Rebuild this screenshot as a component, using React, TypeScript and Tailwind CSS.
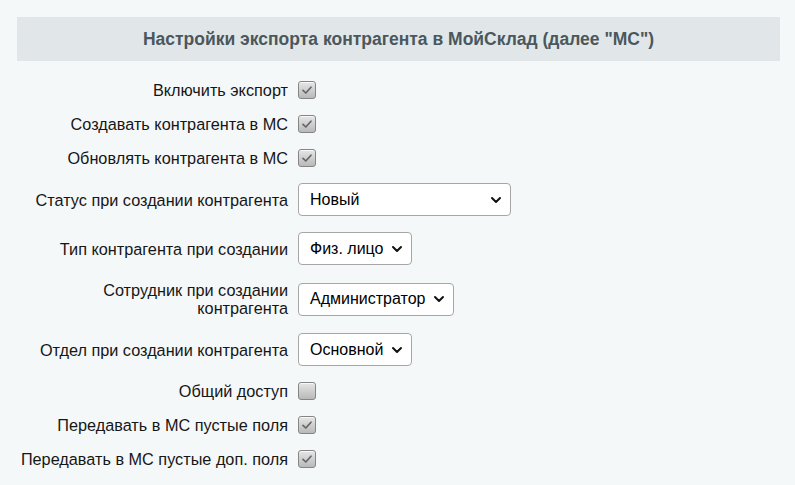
import React from "react";

type Row =
  | { kind: "check"; label: string; checked: boolean }
  | { kind: "select"; label: string; value: string; width: string };

const rows: Row[] = [
  { kind: "check", label: "Включить экспорт", checked: true },
  { kind: "check", label: "Создавать контрагента в МС", checked: true },
  { kind: "check", label: "Обновлять контрагента в МС", checked: true },
  { kind: "select", label: "Статус при создании контрагента", value: "Новый", width: "w-[213px]" },
  { kind: "select", label: "Тип контрагента при создании", value: "Физ. лицо", width: "w-[114px]" },
  { kind: "select", label: "Сотрудник при создании контрагента", value: "Администратор", width: "w-[156px]" },
  { kind: "select", label: "Отдел при создании контрагента", value: "Основной", width: "w-[114px]" },
  { kind: "check", label: "Общий доступ", checked: false },
  { kind: "check", label: "Передавать в МС пустые поля", checked: true },
  { kind: "check", label: "Передавать в МС пустые доп. поля", checked: true },
];

function Checkbox({ checked }: { checked: boolean }) {
  return (
    <span className="flex h-[18px] w-[18px] items-center justify-center rounded-[3px] border border-[#858585] bg-gradient-to-b from-[#e6e6e6] to-[#b9b9b9] shadow-[inset_0_1px_0_#f8f8f8]">
      {checked && (
        <svg width="12" height="12" viewBox="0 0 12 12" fill="none">
          <path d="M2 6.3 L4.8 9 L10 3.2" stroke="#666" strokeWidth="1.7" strokeLinecap="round" strokeLinejoin="round" />
        </svg>
      )}
    </span>
  );
}

function Select({ value, width }: { value: string; width: string }) {
  return (
    <div className={`${width} flex h-[33px] items-center justify-between rounded-[4px] border border-[#a6a6a6] bg-white pl-[11px] pr-[8px] text-[16px] text-black`}>
      <span>{value}</span>
      <svg width="12" height="12" viewBox="0 0 12 12" fill="none">
        <path d="M2 4 L6 8 L10 4" stroke="#111" strokeWidth="2" strokeLinecap="round" strokeLinejoin="round" />
      </svg>
    </div>
  );
}

export default function App() {
  return (
    <div className="min-h-[485px] bg-[#f5f8f9] pt-[17px] pl-[17px] pr-[15px] font-['Liberation_Sans',Arial,sans-serif] text-[#161616]">
      <div className="flex h-[44px] items-center justify-center bg-[#e1e7e8] text-[17.5px] font-bold text-[#4b575c]">
        Настройки экспорта контрагента в МойСклад (далее "МС")
      </div>
      <div className="mt-[12px] flex flex-col">
        {rows.map((r) => (
          <div
            key={r.label}
            className={`flex items-center gap-[10px] ${r.kind === "check" ? "h-[34px]" : "py-[8px]"}`}
          >
            <div className="w-[271px] text-right text-[16.25px] leading-[18px]">{r.label}</div>
            {r.kind === "check" ? <Checkbox checked={r.checked} /> : <Select value={r.value} width={r.width} />}
          </div>
        ))}
      </div>
    </div>
  );
}
